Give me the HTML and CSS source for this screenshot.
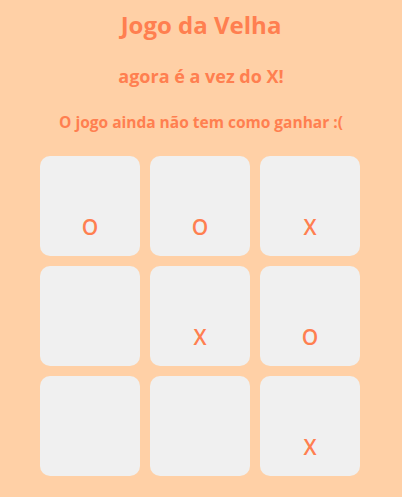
FILE: index.html
```html
<!DOCTYPE html>
<html lang="pt">
<head>
<meta charset="utf-8">
<link rel="stylesheet" href="styles.css">
</head>
<body>
<main class="game">
  <h1 class="title">Jogo da Velha</h1>
  <h2 class="turn">agora é a vez do X!</h2>
  <h3 class="status">O jogo ainda não tem como ganhar :(</h3>
  <div class="board">
    <div class="cell">O</div>
    <div class="cell">O</div>
    <div class="cell">X</div>
    <div class="cell"></div>
    <div class="cell">X</div>
    <div class="cell">O</div>
    <div class="cell"></div>
    <div class="cell"></div>
    <div class="cell">X</div>
  </div>
</main>
</body>
</html>
```
FILE: styles.css
```css
html, body {
  margin: 0;
  padding: 0;
  background: #ffd0a6;
}
body {
  font-family: "Open Sans", "Noto Sans", sans-serif;
  color: #ff7f50;
}
.game {
  display: flex;
  flex-direction: column;
  align-items: center;
  padding-top: 8px;
}
.title {
  margin: 0;
  font-size: 24px;
  font-weight: 700;
  line-height: 34px;
}
.turn {
  margin: 22px 0 0;
  font-size: 18px;
  font-weight: 700;
  line-height: 24px;
}
.status {
  margin: 24px 0 0;
  font-size: 15.5px;
  font-weight: 700;
  line-height: 20px;
}
.board {
  margin-top: 24px;
  display: grid;
  grid-template-columns: repeat(3, 100px);
  grid-auto-rows: 100px;
  gap: 10px;
  margin-left: -2px;
}
.cell {
  background: #f0f0f0;
  border-radius: 10px;
  display: flex;
  align-items: flex-end;
  justify-content: center;
  padding-bottom: 14px;
  box-sizing: border-box;
  font-size: 21px;
  font-weight: 600;
  line-height: 30px;
  color: #ff7f50;
}
```
